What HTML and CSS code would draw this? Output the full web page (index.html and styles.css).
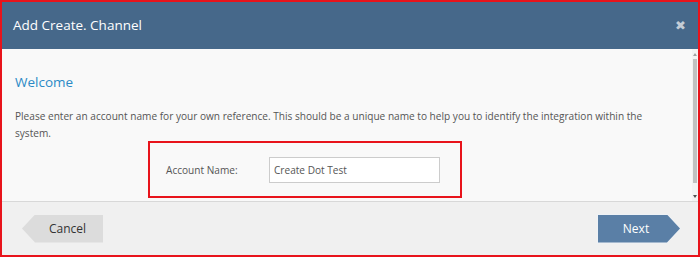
FILE: index.html
```html
<!DOCTYPE html>
<html lang="en">
<head>
    <meta charset="UTF-8">
    <title>Add Create. Channel</title>
    <link rel="stylesheet" href="styles.css">
</head>
<body>
    <div class="dialog">
        <header class="dialog-header">
            <h1>Add Create. Channel</h1>
            <span class="close">&#10006;</span>
        </header>

        <div class="dialog-body">
            <div class="content">
                <h2>Welcome</h2>
                <p>Please enter an account name for your own reference. This should be a unique name to help you to identify the integration within the system.</p>
                <div class="field-box">
                    <label for="account">Account Name:</label>
                    <input id="account" type="text" value="Create Dot Test">
                </div>
            </div>
            <div class="scrollbar">
                <span class="arrow up"></span>
                <span class="thumb"></span>
                <span class="arrow down"></span>
            </div>
        </div>

        <footer class="dialog-footer">
            <button class="btn btn-back">Cancel</button>
            <span class="btn-next-edge"><button class="btn btn-next">Next</button></span>
        </footer>
    </div>
</body>
</html>
```

FILE: styles.css
```css
* {
    box-sizing: border-box;
}
body {
    margin: 0;
    font-family: "Open Sans", Arial, sans-serif;
    color: #555;
}
.dialog {
    width: 700px;
    height: 257px;
    border: 2px solid #e8131b;
    display: flex;
    flex-direction: column;
    background-color: #f0f0f0;
}
.dialog-header {
    height: 47px;
    background-color: #46688a;
    display: flex;
    align-items: center;
    justify-content: space-between;
    padding: 0 12px 0 11px;
    flex-shrink: 0;
}
.dialog-header h1 {
    margin: 0 0 1px;
    font-size: 13.5px;
    font-weight: normal;
    color: #fff;
}
.close {
    color: #c3ccd6;
    font-size: 13px;
    margin-bottom: 1px;
}
.dialog-body {
    height: 153px;
    display: flex;
    background-color: #f9f9f9;
    border-bottom: 1px solid #d8d8d8;
    flex-shrink: 0;
}
.content {
    flex: 1;
    padding: 0 30px 0 13px;
}
.content h2 {
    margin: 24px 0 0;
    font-size: 13.5px;
    line-height: 18px;
    font-weight: normal;
    color: #2b8ac6;
}
.content p {
    margin: 17px 0 0;
    font-size: 10.1px;
    line-height: 17px;
    color: #555;
}
.field-box {
    width: 314px;
    height: 57px;
    margin: -1px 0 0 133px;
    border: 2px solid #e8131b;
    display: flex;
    align-items: center;
    padding: 0 0 0 16px;
}
.field-box label {
    width: 103px;
    font-size: 10.1px;
    color: #555;
}
.field-box input {
    width: 171px;
    height: 26px;
    border: 1px solid #ccc;
    background: #fff;
    font-family: "Open Sans", Arial, sans-serif;
    font-size: 10.1px;
    color: #555;
    padding: 0 4px;
}
.scrollbar {
    width: 6px;
    display: flex;
    flex-direction: column;
    align-items: center;
    background-color: #f3f3f3;
    padding: 4px 0 3px;
}
.arrow {
    width: 0;
    height: 0;
    border-left: 2px solid transparent;
    border-right: 2px solid transparent;
}
.arrow.up {
    border-bottom: 3px solid #a0a0a0;
}
.arrow.down {
    border-top: 3px solid #505050;
}
.thumb {
    width: 4px;
    height: 124px;
    margin: 3px 0 auto;
    background-color: #c1c1c1;
}
.dialog-footer {
    flex: 1;
    display: flex;
    align-items: center;
    justify-content: space-between;
    padding: 0 17px 0 20px;
}
.btn {
    height: 28px;
    border: none;
    font-family: "Open Sans", Arial, sans-serif;
    font-size: 12px;
    cursor: pointer;
}
.btn-back {
    width: 81px;
    padding-left: 16px;
    background-color: #dcdcdc;
    color: #333;
    clip-path: polygon(13px 0, 100% 0, 100% 100%, 13px 100%, 0 50%);
}
.btn-next-edge {
    display: flex;
    padding: 1px;
    background-color: #eef2f6;
    clip-path: polygon(0 0, calc(100% - 14px) 0, 100% 50%, calc(100% - 14px) 100%, 0 100%);
}
.btn-next {
    width: 82px;
    padding-right: 12px;
    background-color: #5a7fa6;
    color: #fff;
    clip-path: polygon(0 0, calc(100% - 13px) 0, 100% 50%, calc(100% - 13px) 100%, 0 100%);
}
```
